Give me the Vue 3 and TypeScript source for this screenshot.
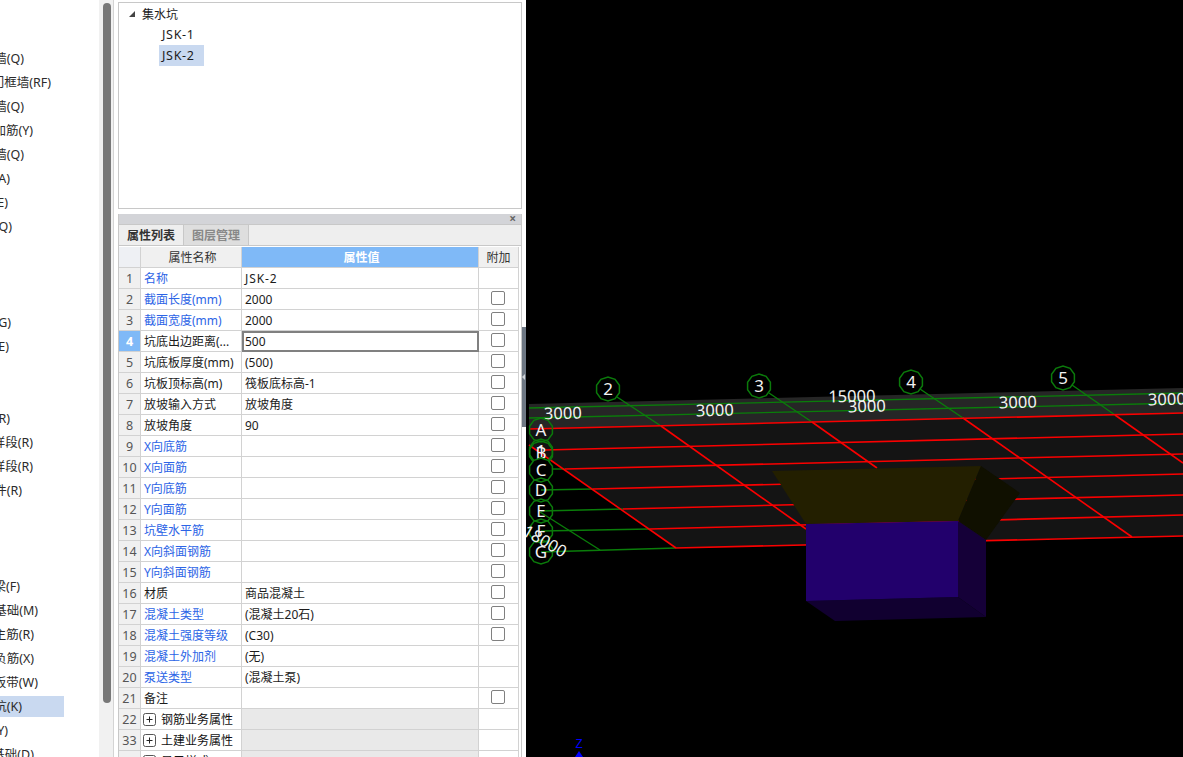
<script setup lang="ts">
type SideRow = { text: string; end: number; selected?: boolean };
const sideRows: SideRow[] = [
  { text: '剪力墙(Q)', end: 24 }, { text: '人防门框墙(RF)', end: 51 }, { text: '砌体墙(Q)', end: 24 },
  { text: '砌体加筋(Y)', end: 33 }, { text: '保温墙(Q)', end: 24 }, { text: '暗梁(A)', end: 10 },
  { text: '墙垛(E)', end: 8 }, { text: '幕墙(Q)', end: 12 }, { text: '', end: 0 }, { text: '', end: 0 },
  { text: '', end: 0 }, { text: '过梁(G)', end: 11 }, { text: '壁龛(E)', end: 9 }, { text: '', end: 0 },
  { text: '', end: 0 }, { text: '板(R)', end: 10 }, { text: '梁样段(R)', end: 33 }, { text: '板样段(R)', end: 33 },
  { text: '构件(R)', end: 22 }, { text: '', end: 0 }, { text: '', end: 0 }, { text: '', end: 0 },
  { text: '基础梁(F)', end: 20 }, { text: '筏板基础(M)', end: 38 }, { text: '筏板主筋(R)', end: 34 },
  { text: '筏板负筋(X)', end: 34 }, { text: '基础板带(W)', end: 38 }, { text: '集水坑(K)', end: 22, selected: true },
  { text: '柱墩(Y)', end: 8 }, { text: '独立基础(D)', end: 34 },
];

type Row = { n: number; name: string; value: string; blue?: boolean; check?: boolean; focus?: boolean; group?: boolean };
const rows: Row[] = [
  { n: 1, name: '名称', value: 'JSK-2', blue: true },
  { n: 2, name: '截面长度(mm)', value: '2000', blue: true, check: true },
  { n: 3, name: '截面宽度(mm)', value: '2000', blue: true, check: true },
  { n: 4, name: '坑底出边距离(...', value: '500', check: true, focus: true },
  { n: 5, name: '坑底板厚度(mm)', value: '(500)', check: true },
  { n: 6, name: '坑板顶标高(m)', value: '筏板底标高-1', check: true },
  { n: 7, name: '放坡输入方式', value: '放坡角度', check: true },
  { n: 8, name: '放坡角度', value: '90', check: true },
  { n: 9, name: 'X向底筋', value: '', blue: true, check: true },
  { n: 10, name: 'X向面筋', value: '', blue: true, check: true },
  { n: 11, name: 'Y向底筋', value: '', blue: true, check: true },
  { n: 12, name: 'Y向面筋', value: '', blue: true, check: true },
  { n: 13, name: '坑壁水平筋', value: '', blue: true, check: true },
  { n: 14, name: 'X向斜面钢筋', value: '', blue: true, check: true },
  { n: 15, name: 'Y向斜面钢筋', value: '', blue: true, check: true },
  { n: 16, name: '材质', value: '商品混凝土', check: true },
  { n: 17, name: '混凝土类型', value: '(混凝土20石)', blue: true, check: true },
  { n: 18, name: '混凝土强度等级', value: '(C30)', blue: true, check: true },
  { n: 19, name: '混凝土外加剂', value: '(无)', blue: true },
  { n: 20, name: '泵送类型', value: '(混凝土泵)', blue: true },
  { n: 21, name: '备注', value: '', check: true },
  { n: 22, name: '钢筋业务属性', value: '', group: true },
  { n: 33, name: '土建业务属性', value: '', group: true },
  { n: 38, name: '显示样式', value: '', group: true },
];

const redLines = [
  [529, 429, 1183, 413], [545, 450, 1183, 434], [565, 469, 1183, 454], [593, 489, 1183, 474],
  [623, 509, 1183, 495], [650, 529, 1183, 515], [676, 548, 1183, 536],
  [529, 445, 676, 548], [661, 426, 806, 529], [812, 422, 877, 468], [963, 418, 1132, 537], [1115, 415, 1183, 463],
];
const greenLines = [
  [529, 408, 1183, 393], [529, 418, 1183, 403], [541, 469, 565, 469], [541, 490, 593, 489],
  [541, 511, 623, 509], [541, 531, 650, 529], [541, 552, 676, 548], [540, 512, 600, 550],
  [617, 397, 661, 426], [769, 393, 812, 422], [920, 389, 963, 418], [1072, 385, 1115, 415],
];
const dims = [
  { t: '3000', x: 563, y: 419 }, { t: '3000', x: 715, y: 416 }, { t: '15000', x: 852, y: 402 },
  { t: '3000', x: 867, y: 412 }, { t: '3000', x: 1018, y: 408 }, { t: '3000', x: 1167, y: 405 },
];
const bubbleList = [
  { t: '2', x: 608, y: 389 }, { t: '3', x: 759, y: 386 }, { t: '4', x: 911, y: 382 }, { t: '5', x: 1063, y: 378 },
  { t: 'A', x: 541, y: 430 }, { t: '1', x: 541, y: 451 }, { t: 'B', x: 541, y: 453 }, { t: 'C', x: 541, y: 470, solid: true },
  { t: 'D', x: 541, y: 490 }, { t: 'E', x: 541, y: 511 }, { t: 'F', x: 541, y: 531 }, { t: 'G', x: 541, y: 552 },
];
function ring(cx: number, cy: number): string {
  const pts: string[] = [];
  for (let i = 0; i < 10; i++) {
    const a = (Math.PI * 2 * i) / 10 + Math.PI / 10;
    pts.push(`${(cx + 12 * Math.cos(a)).toFixed(1)},${(cy + 12 * Math.sin(a)).toFixed(1)}`);
  }
  return pts.join(' ');
}
</script>

<template>
  <div class="screen">
    <aside class="side">
      <div v-for="(r, i) in sideRows" :key="i" class="side-row" :class="{ selected: r.selected }">
        <span class="side-text" :style="{ width: r.end + 'px' }">{{ r.text }}</span>
      </div>
    </aside>
    <div class="gutter"><div class="thumb"></div></div>

    <main class="center">
      <section class="tree">
        <div class="tree-row root"><span class="caret"></span>集水坑</div>
        <div class="tree-row leaf"><span class="leaf-text">JSK-1</span></div>
        <div class="tree-row leaf"><span class="leaf-text active">JSK-2</span></div>
      </section>

      <section class="props">
        <div class="title-bar"><span class="close">×</span></div>
        <div class="tabs">
          <div class="tab on">属性列表</div>
          <div class="tab off">图层管理</div>
        </div>
        <div class="grid">
          <div class="cell idx head"></div>
          <div class="cell name head center-text">属性名称</div>
          <div class="cell value-head">属性值</div>
          <div class="cell extra head">附加</div>
          <template v-for="r in rows" :key="r.n">
            <div class="cell idx" :class="{ current: r.focus }">{{ r.n }}</div>
            <div class="cell name" :class="{ blue: r.blue, group: r.group }">
              <span v-if="r.group" class="plus"><svg width="13" height="13" viewBox="0 0 13 13"><rect x="0.5" y="0.5" width="12" height="12" rx="2" fill="#fff" stroke="#555"/><path d="M3.5 6.5h6M6.5 3.5v6" stroke="#222" fill="none"/></svg></span>{{ r.name }}
            </div>
            <div class="cell value" :class="{ focus: r.focus, grey: r.group, latin: r.n === 1 }">{{ r.value }}</div>
            <div class="cell extra"><span v-if="r.check" class="check"></span></div>
          </template>
        </div>
      </section>
    </main>

    <div class="splitter"><div class="grip"><span class="grip-arrow"></span></div></div>

    <div class="canvas">
      <svg class="scene" width="657" height="757" viewBox="526 0 657 757">
        <polygon points="529,404 1183,388 1183,413 529,429" fill="#262626" />
        <polygon points="529,429 1183,413 1183,536 676,548 529,445" fill="#141414" />
        <line v-for="(l, i) in greenLines" :key="'g' + i" :x1="l[0]" :y1="l[1]" :x2="l[2]" :y2="l[3]" stroke="#0a7d0a" stroke-width="1.4" />
        <line v-for="(l, i) in redLines" :key="'r' + i" :x1="l[0]" :y1="l[1]" :x2="l[2]" :y2="l[3]" stroke="#fa0000" stroke-width="1.6" />

        <polygon points="772,471 981,466 958,521 806,524" fill="#231f00" />
        <polygon points="981,466 1020,493 986,540 958,521" fill="#101000" />
        <polygon points="806,601 958,597 986,617 835,621" fill="#110030" />
        <polygon points="958,521 986,540 986,617 958,597" fill="#150038" />
        <polygon points="806,524 958,521 958,597 806,601" fill="#22006c" />

        <text v-for="(d, i) in dims" :key="'d' + i" :x="d.x" :y="d.y" class="dim" text-anchor="middle" :transform="`rotate(-1.4 ${d.x} ${d.y})`">{{ d.t }}</text>

        <g v-for="(b, i) in bubbleList" :key="'b' + i">
          <polygon :points="ring(b.x, b.y)" :fill="b.solid ? '#000' : 'none'" stroke="#0b7a0b" stroke-width="1.5" />
          <text :x="b.x" :y="b.y + 6" class="bubble" text-anchor="middle">{{ b.t }}</text>
        </g>
        <text x="545" y="547" class="dim" text-anchor="middle" transform="rotate(30 545 541)">18000</text>

        <text x="579" y="748" class="axis" text-anchor="middle">Z</text>
        <polygon points="579,751 583,757 575,757" fill="#0000ff" />
      </svg>
    </div>
  </div>
</template>

<style>
html, body { margin: 0; background: #fff; overflow: hidden; }
</style>

<style scoped>
.screen {
  display: flex;
  width: 1183px;
  height: 757px;
  overflow: hidden;
  background: #fff;
  color: #1c1c1c;
  font: 12px/21px "Noto Sans", "Noto Sans CJK SC", sans-serif;
}
.side {
  flex: 0 0 99px;
  padding-top: 48px;
  display: flex;
  flex-direction: column;
  gap: 3px;
  overflow: hidden;
}
.side-row { height: 21px; flex: none; color: #2b2b2b; }
.side-row.selected { width: 64px; background: #c9d9f0; }
.side-text {
  display: flex;
  justify-content: flex-end;
  white-space: nowrap;
  font-size: 12.5px;
}
.gutter {
  flex: 0 0 15px;
  box-sizing: border-box;
  background: #f1f1f1;
  border-right: 1px solid #d4d4d4;
  padding: 3px 2px 0 4px;
}
.thumb { width: 8px; height: 700px; border-radius: 4px; background: #787878; }
.center {
  flex: 0 0 404px;
  margin-left: 4px;
  padding-top: 2px;
  box-sizing: border-box;
  display: flex;
  flex-direction: column;
  gap: 5px;
  overflow: hidden;
}
.tree {
  flex: 0 0 207px;
  box-sizing: border-box;
  background: #fff;
  border: 1px solid #c8c8c8;
  padding-left: 9px;
}
.tree-row { height: 21px; display: flex; align-items: center; box-sizing: border-box; }
.root { padding-top: 1px; gap: 7px; }
.caret {
  width: 0;
  height: 0;
  border-style: solid;
  border-width: 0 0 6px 6px;
  border-color: transparent transparent #444 transparent;
  margin-left: 1px;
}
.leaf { padding-left: 31px; }
.leaf-text { display: block; padding: 0 9px 0 3px; height: 21px; font-size: 12.5px; letter-spacing: 0.7px; }
.active { background: #c9d9f0; }
.props {
  flex: 1;
  min-height: 0;
  box-sizing: border-box;
  border-left: 1px solid #c8c8c8;
  border-right: 1px solid #c8c8c8;
  background: #fff;
}
.title-bar {
  height: 10px;
  background: #d3d4d8;
  display: flex;
  justify-content: flex-end;
  align-items: center;
  padding-right: 5px;
}
.close { color: #666; font-size: 12px; line-height: 10px; font-weight: 700; }
.tabs {
  height: 22px;
  background: #eeeeee;
  display: flex;
  border-bottom: 1px solid #c8c8c8;
  border-top: 1px solid #c8c8c8;
  box-sizing: border-box;
}
.tab { width: 64px; text-align: center; font-weight: 700; line-height: 22px; }
.on { color: #333; border-right: 1px solid #c8c8c8; }
.off { background: #dedede; color: #888; border-right: 1px solid #c8c8c8; }
.grid {
  display: grid;
  grid-template-columns: 22px 101px 237px 40px;
  grid-auto-rows: 21px;
  margin-top: 1px;
}
.cell {
  box-sizing: border-box;
  border-right: 1px solid #d2d2d2;
  border-bottom: 1px solid #d2d2d2;
  padding-left: 3px;
  line-height: 21px;
  white-space: nowrap;
  overflow: hidden;
}
.idx { background: #f0f0f0; padding: 0; text-align: center; color: #555; font-size: 12.5px; }
.idx.head { background: #eef0f4; }
.idx.current { background: #7fb9f7; color: #fff; font-weight: 700; }
.head { background: #f0f0f0; color: #333; }
.center-text { text-align: center; }
.value-head { background: #7fb9f7; color: #fff; text-align: center; font-weight: 700; }
.extra { text-align: center; padding: 0; color: #333; display: flex; align-items: center; justify-content: center; }
.extra.head { background: #f0f0f0; }
.blue { color: #2c64e6; }
.group { display: flex; align-items: center; gap: 5px; color: #111; }
.plus { display: inline-flex; flex: none; margin-left: -1px; }
.value.grey { background: #e9e9e9; }
.value.focus { border: 2px solid #808080; padding-left: 1px; line-height: 17px; }
.value.latin { letter-spacing: 0.9px; }
.check {
  width: 14px;
  height: 14px;
  box-sizing: border-box;
  border: 1px solid #808080;
  border-radius: 2px;
  background: #fff;
  margin: -2px 1px 0 0;
}
.splitter { flex: 0 0 4px; padding-top: 327px; }
.grip {
  height: 100px;
  background: #6e7884;
  display: flex;
  align-items: center;
}
.grip-arrow {
  width: 0;
  height: 0;
  border-style: solid;
  border-width: 3px 3px 3px 0;
  border-color: transparent #cfd3d8 transparent transparent;
}
.canvas { flex: 1; background: #000; }
.scene { display: block; }
.dim { fill: #f2f2f2; font: 16.5px "Noto Sans", sans-serif; }
.bubble { fill: #f2f2f2; font: 17px "Noto Sans", sans-serif; }
.axis { fill: #0000ff; font: 12px "Liberation Mono", monospace; }
</style>
